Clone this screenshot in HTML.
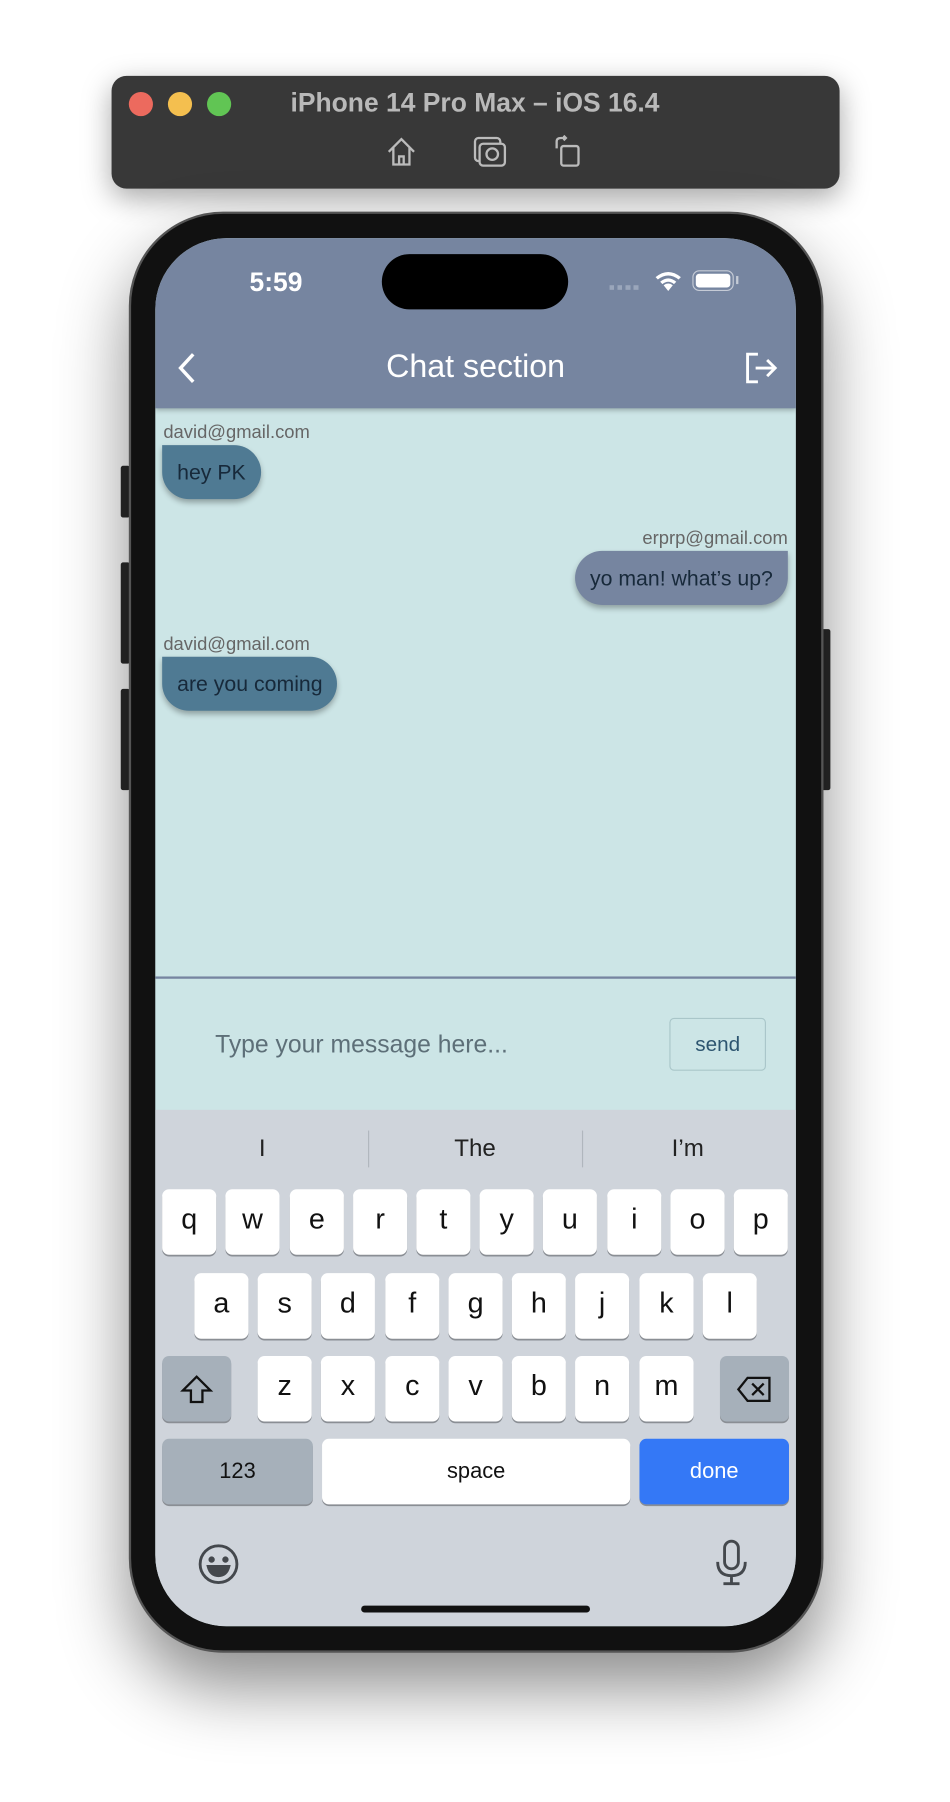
<!DOCTYPE html>
<html><head><meta charset="utf-8"><style>
html,body{margin:0;padding:0;background:#fff;width:950px;height:1802px;overflow:hidden}
#s{position:absolute;left:0;top:0;width:826px;height:1567px;transform:scale(1.15012);transform-origin:0 0;font-family:"Liberation Sans",sans-serif}
.a{position:absolute}
.key{position:absolute;width:47px;height:57px;background:#fff;border-radius:6px;box-shadow:0 1.5px 0 #8a8e94;font-size:25px;color:#111;text-align:center;line-height:52px}
.g{background:#a6b0ba}
.t{font-size:16px;color:#666}
.b{position:absolute;height:47px;border-radius:0 24px 24px 24px;font-size:18.5px;color:#17293a;line-height:47px;padding:0 13px;box-shadow:0 3px 5px rgba(0,0,0,.3)}
</style></head><body><div id="s">
<div class="a" style="left:97px;top:66px;width:633px;height:98px;background:#383838;border-radius:13px;box-shadow:0 8px 25px rgba(0,0,0,.35)"></div>
<div class="a" style="left:112px;top:80px;width:21px;height:21px;border-radius:50%;background:#ec6a5e"></div>
<div class="a" style="left:146px;top:80px;width:21px;height:21px;border-radius:50%;background:#f4bf4f"></div>
<div class="a" style="left:180px;top:80px;width:21px;height:21px;border-radius:50%;background:#61c554"></div>
<div class="a" style="left:213px;top:76px;width:400px;text-align:center;color:#b9b9b9;font-weight:bold;font-size:23px">iPhone 14 Pro Max – iOS 16.4</div>
<svg class="a" style="left:334px;top:117px" width="30" height="30" viewBox="0 0 30 30" fill="none" stroke="#bbb" stroke-width="2"><path d="M4 15 L15 4 L26 15 M8 11 V26 H22 V11 M13 26 V19 H17 V26"/></svg>
<svg class="a" style="left:410px;top:117px" width="32" height="30" viewBox="0 0 32 30" fill="none" stroke="#bbb" stroke-width="2"><rect x="3" y="3" width="22" height="20" rx="3"/><rect x="7" y="8" width="22" height="19" rx="3" fill="#383838"/><circle cx="18" cy="17" r="5"/></svg>
<svg class="a" style="left:480px;top:117px" width="30" height="30" viewBox="0 0 30 30" fill="none" stroke="#bbb" stroke-width="2"><rect x="8" y="10" width="15" height="17" rx="2"/><path d="M4 12 V6 Q4 3 8 3 H12 M10 1 L12 3 L10 5"/></svg>
<div class="a" style="left:105px;top:405px;width:8px;height:45px;background:#2a2a2a;border-radius:2px"></div>
<div class="a" style="left:105px;top:489px;width:8px;height:88px;background:#2a2a2a;border-radius:2px"></div>
<div class="a" style="left:105px;top:599px;width:8px;height:88px;background:#2a2a2a;border-radius:2px"></div>
<div class="a" style="left:714px;top:547px;width:8px;height:140px;background:#2a2a2a;border-radius:2px"></div>
<div class="a" style="left:112px;top:184px;width:604px;height:1253px;border-radius:82px;background:#111;border:2px solid #555;box-sizing:border-box;box-shadow:0 30px 60px rgba(0,0,0,.45)"></div>
<div class="a" style="left:135px;top:207px;width:557px;height:1207px;border-radius:62px;overflow:hidden;background:#cce5e6">
  <div class="a" style="left:0;top:0;width:557px;height:148px;background:#7685a0;box-shadow:0 2px 4px rgba(0,0,0,.25)"></div>
  <div class="a" style="left:197px;top:14px;width:162px;height:48px;border-radius:24px;background:#000"></div>
  <div class="a" style="left:65px;top:25px;width:80px;text-align:center;color:#fff;font-size:23px;font-weight:bold">5:59</div>
  <div class="a" style="left:395px;top:41px;width:28px;height:4px;background:repeating-linear-gradient(90deg,#9aa6bb 0 4px,transparent 4px 7px)"></div>
  <svg class="a" style="left:433px;top:27px" width="26" height="20" viewBox="0 0 26 20" fill="#fff"><path d="M13 19 L9 14 Q13 11 17 14Z M6 11 Q13 5 20 11 L18 13 Q13 9 8 13Z M2 7 Q13 -2 24 7 L22 9 Q13 2 4 9Z"/></svg>
  <div class="a" style="left:467px;top:28px;width:36px;height:18px;border:1.5px solid #c5cbd6;border-radius:6px;box-sizing:border-box"></div>
  <div class="a" style="left:470px;top:31px;width:30px;height:12px;background:#fff;border-radius:3px"></div>
  <div class="a" style="left:505px;top:33px;width:2px;height:7px;background:#c5cbd6"></div>
  <svg class="a" style="left:18px;top:98px" width="20" height="30" viewBox="0 0 20 30" fill="none" stroke="#fff" stroke-width="3"><path d="M15 3 L4 15 L15 27"/></svg>
  <div class="a" style="left:0;top:96px;width:557px;text-align:center;color:#fff;font-size:28px">Chat section</div>
  <svg class="a" style="left:512px;top:98px" width="30" height="30" viewBox="0 0 30 30" fill="none" stroke="#fff" stroke-width="2.5"><path d="M12 3 H3 V27 H12 M10 15 H27 M20 8 L27 15 L20 22"/></svg>
  <div class="a t" style="left:7px;top:161px">david@gmail.com</div>
  <div class="b" style="left:6px;top:180px;background:#4f7a93">hey PK</div>
  <div class="a t" style="right:7px;top:253px">erprp@gmail.com</div>
  <div class="b" style="right:7px;top:272px;background:#7685a0;border-radius:24px 0 24px 24px">yo man! what’s up?</div>
  <div class="a t" style="left:7px;top:345px">david@gmail.com</div>
  <div class="b" style="left:6px;top:364px;background:#4f7a93">are you coming</div>
  <div class="a" style="left:0;top:642px;width:557px;height:2px;background:#7685a0"></div>
  <div class="a" style="left:52px;top:689px;font-size:21.5px;color:#5d6f78">Type your message here...</div>
  <div class="a" style="left:447px;top:678px;width:82px;height:44px;border:1.5px solid #a9c6c9;border-radius:4px;text-align:center;line-height:44px;font-size:18px;color:#2d5570">send</div>
  <div class="a" style="left:0;top:758px;width:557px;height:449px;background:#cfd4db"></div>
  <div class="a" style="left:43px;top:780px;width:100px;text-align:center;font-size:21px;color:#222">I</div>
  <div class="a" style="left:185px;top:776px;width:1px;height:32px;background:#b0b6bd"></div>
  <div class="a" style="left:228px;top:780px;width:100px;text-align:center;font-size:21px;color:#222">The</div>
  <div class="a" style="left:371px;top:776px;width:1px;height:32px;background:#b0b6bd"></div>
  <div class="a" style="left:413px;top:780px;width:100px;text-align:center;font-size:21px;color:#222">I’m</div>
</div>
<div class="key" style="left:141px;top:1034px">q</div><div class="key" style="left:196px;top:1034px">w</div><div class="key" style="left:252px;top:1034px">e</div><div class="key" style="left:307px;top:1034px">r</div><div class="key" style="left:362px;top:1034px">t</div><div class="key" style="left:417px;top:1034px">y</div><div class="key" style="left:472px;top:1034px">u</div><div class="key" style="left:528px;top:1034px">i</div><div class="key" style="left:583px;top:1034px">o</div><div class="key" style="left:638px;top:1034px">p</div>
<div class="key" style="left:169px;top:1107px">a</div><div class="key" style="left:224px;top:1107px">s</div><div class="key" style="left:279px;top:1107px">d</div><div class="key" style="left:335px;top:1107px">f</div><div class="key" style="left:390px;top:1107px">g</div><div class="key" style="left:445px;top:1107px">h</div><div class="key" style="left:500px;top:1107px">j</div><div class="key" style="left:556px;top:1107px">k</div><div class="key" style="left:611px;top:1107px">l</div>
<div class="key g" style="left:141px;top:1179px;width:60px"><svg width="30" height="26" viewBox="0 0 30 26" style="margin-top:16px" fill="none" stroke="#111" stroke-width="2"><path d="M15 2 L3 14 H10 V24 H20 V14 H27 Z"/></svg></div>
<div class="key" style="left:224px;top:1179px">z</div><div class="key" style="left:279px;top:1179px">x</div><div class="key" style="left:335px;top:1179px">c</div><div class="key" style="left:390px;top:1179px">v</div><div class="key" style="left:445px;top:1179px">b</div><div class="key" style="left:500px;top:1179px">n</div><div class="key" style="left:556px;top:1179px">m</div>
<div class="key g" style="left:626px;top:1179px;width:60px"><svg width="32" height="24" viewBox="0 0 32 24" style="margin-top:17px" fill="none" stroke="#111" stroke-width="2"><path d="M10 2 H29 V22 H10 L2 12 Z M14 7 L24 17 M24 7 L14 17"/></svg></div>
<div class="key g" style="left:141px;top:1251px;width:131px;font-size:19px;line-height:57px">123</div>
<div class="key" style="left:280px;top:1251px;width:268px;font-size:19px;line-height:57px">space</div>
<div class="key" style="left:556px;top:1251px;width:130px;background:#3478f6;color:#fff;font-size:19px;line-height:57px">done</div>
<svg class="a" style="left:171px;top:1341px" width="38" height="38" viewBox="0 0 38 38" fill="none" stroke="#44484d" stroke-width="2.5"><circle cx="19" cy="19" r="16"/><circle cx="13" cy="15" r="1.5" fill="#44484d"/><circle cx="25" cy="15" r="1.5" fill="#44484d"/><path d="M10 21 H28 Q26 29 19 29 Q12 29 10 21Z" fill="#44484d"/></svg>
<svg class="a" style="left:620px;top:1338px" width="32" height="42" viewBox="0 0 32 42" fill="none" stroke="#44484d" stroke-width="2.5"><rect x="10" y="2" width="12" height="24" rx="6"/><path d="M4 20 Q4 32 16 32 Q28 32 28 20 M16 32 V39 M9 39 H23"/></svg>
<div class="a" style="left:314px;top:1396px;width:199px;height:6px;border-radius:3px;background:#111"></div>
</div></body></html>
